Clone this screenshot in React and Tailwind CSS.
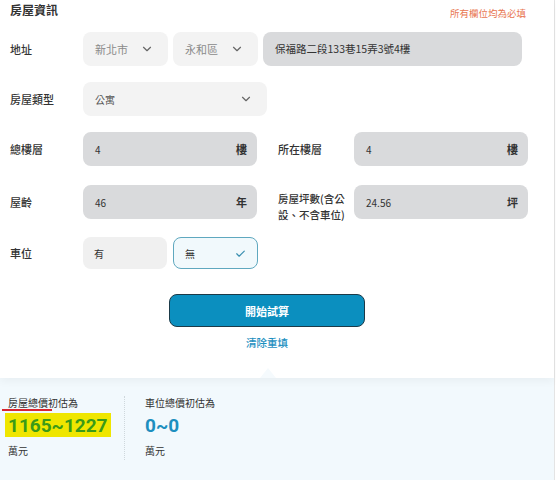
import React from "react";

const font = { fontFamily: '"Noto Sans CJK TC", "Noto Sans", sans-serif' };

const Chevron = ({ className = "" }) => (
  <svg viewBox="0 0 24 24" className={"w-[14px] h-[14px] " + className} fill="none" stroke="currentColor" strokeWidth="2" strokeLinecap="round" strokeLinejoin="round">
    <path d="M6 9l6 6 6-6" />
  </svg>
);

const Select = ({ value, className = "" }) => (
  <div className={"h-[34px] rounded-[8px] bg-[#f3f3f3] flex items-center justify-between pl-[12px] pr-[14px] text-[11px] text-[#8a8a8a] " + className}>
    <span>{value}</span>
    <Chevron className="text-[#666]" />
  </div>
);

const Unit = ({ value, unit }) => (
  <div className="h-[34px] w-[174px] rounded-[8px] bg-[#d9dadc] flex items-center justify-between pl-[12px] pr-[10px] text-[10px] text-[#333]">
    <span>{value}</span>
    <span className="text-[11px] font-bold">{unit}</span>
  </div>
);

const Label = ({ children, className = "" }) => (
  <div className={"text-[11px] font-medium text-[#333] leading-[14px] " + className}>{children}</div>
);

export default function App() {
  return (
    <div style={font} className="w-[556px] h-[480px] bg-white overflow-hidden">
      <div className="w-[555px] h-full border-r border-[#e4e4e4] flex flex-col">
        <div className="relative z-10 bg-white shadow-[0_4px_8px_rgba(0,0,0,0.04)] h-[378px]">
          <div className="flex items-start justify-between pl-[10px] pr-[28px] pt-[1px]">
            <div className="text-[12px] font-bold text-[#333]">房屋資訊</div>
            <div className="text-[9.5px] text-[#e8764f] mt-[5px]">所有欄位均為必填</div>
          </div>

          <div className="flex flex-col gap-[16px] pl-[10px] mt-[12px]">
            <div className="flex items-center">
              <Label className="w-[73px]">地址</Label>
              <div className="flex gap-[5px]">
                <Select value="新北市" className="w-[85px]" />
                <Select value="永和區" className="w-[85px]" />
                <div className="h-[34px] w-[259px] rounded-[8px] bg-[#d9dadc] flex items-center pl-[12px] text-[10.5px] text-[#333]">
                  保福路二段133巷15弄3號4樓
                </div>
              </div>
            </div>

            <div className="flex items-center">
              <Label className="w-[73px]">房屋類型</Label>
              <Select value="公寓" className="w-[184px] !text-[#555] !text-[10px]" />
            </div>

            <div className="flex items-center">
              <Label className="w-[73px]">總樓層</Label>
              <Unit value="4" unit="樓" />
              <Label className="w-[76px] ml-[21px]">所在樓層</Label>
              <Unit value="4" unit="樓" />
            </div>

            <div className="flex items-center">
              <Label className="w-[73px]">屋齡</Label>
              <Unit value="46" unit="年" />
              <div className="w-[76px] ml-[21px] pt-[9px] text-[10.5px] font-medium text-[#333] whitespace-nowrap flex flex-col">
                <span className="leading-[15.5px]">房屋坪數(含公</span>
                <span className="leading-[15.5px]">設、不含車位)</span>
              </div>
              <Unit value="24.56" unit="坪" />
            </div>

            <div className="flex items-center -mt-[1px]">
              <Label className="w-[73px]">車位</Label>
              <div className="flex gap-[6px]">
                <div className="h-[32px] w-[84px] rounded-[8px] bg-[#f0f0f0] flex items-center pl-[11px] text-[10px] text-[#333]">有</div>
                <div className="h-[32px] w-[85px] rounded-[8px] bg-[#f1f9fc] border border-[#5fa8bf] flex items-center justify-between pl-[11px] pr-[10px] text-[10px] text-[#333]">
                  <span>無</span>
                  <svg viewBox="0 0 24 24" className="w-[13px] h-[13px] text-[#3a8fb0]" fill="none" stroke="currentColor" strokeWidth="2.2" strokeLinecap="round" strokeLinejoin="round">
                    <path d="M5 12.5l4.5 4.5L19 7.5" />
                  </svg>
                </div>
              </div>
            </div>
          </div>

          <div className="flex flex-col items-center mt-[25px] pr-[20px]">
            <button className="w-[196px] h-[33px] rounded-[8px] bg-[#0b8fbf] border-[1.5px] border-[#1c3a48] text-white text-[11px] font-bold">
              開始試算
            </button>
            <div className="mt-[8px] text-[10.5px] font-medium text-[#1d8fbf]">清除重填</div>
          </div>
        </div>

        <div className="relative flex-1 bg-[#f2f9fd] flex pt-[18px]">
          <div className="absolute left-[260px] top-[-10px] z-20 w-0 h-0 border-l-[8px] border-r-[8px] border-b-[10px] border-l-transparent border-r-transparent border-b-[#f5fafd]" />
          <div className="w-[124px] pl-[8px] pr-[6px] flex flex-col">
            <div className="relative text-[10px] text-[#333] leading-[14px]">
              房屋總價初估為
              <span className="absolute left-[-6px] top-[13px] w-[50px] h-[1.5px] bg-[#d8262f]" />
            </div>
            <div className="mt-[3px] self-start -ml-[3px] bg-[#efe600] px-[3px] h-[24px] flex items-center text-[19px] font-bold text-[#3a9a18] leading-none" style={{ fontFamily: '"Roboto", "Noto Sans", sans-serif' }}>
              1165~1227
            </div>
            <div className="mt-[6px] text-[10px] text-[#333]">萬元</div>
          </div>
          <div className="h-[64px] border-l border-dotted border-[#cfd8dc]" />
          <div className="pl-[20px] flex flex-col">
            <div className="text-[10px] text-[#333] leading-[14px]">車位總價初估為</div>
            <div className="mt-[3px] h-[24px] flex items-center text-[19px] font-bold text-[#1d8fbf] leading-none" style={{ fontFamily: '"Roboto", "Noto Sans", sans-serif' }}>
              0~0
            </div>
            <div className="mt-[6px] text-[10px] text-[#333]">萬元</div>
          </div>
        </div>
      </div>
    </div>
  );
}
